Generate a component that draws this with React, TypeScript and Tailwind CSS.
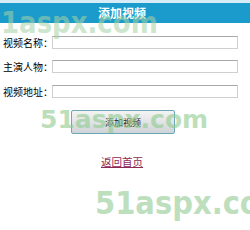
import React from "react";

export default function App() {
  const cjk = { fontFamily: '"Noto Sans CJK SC", "Noto Sans", sans-serif' };
  const wm = { fontFamily: '"DejaVu Sans", Verdana, sans-serif' };
  return (
    <div className="relative w-[250px] h-[230px] overflow-hidden bg-white" style={cjk}>
      <div className="border-t-[3px] border-[#d6ecf6]">
        <div className="h-[20px] bg-[#1a9bcb] flex items-center justify-center pr-[6px] text-white font-bold text-[12px] leading-none">
          添加视频
        </div>
      </div>
      <div className="flex flex-col gap-[11px] pt-[13px] pl-[3px] text-[10px] text-black">
        <div className="flex items-center h-[13px]">
          <span className="w-[49px] shrink-0 whitespace-nowrap">视频名称：</span>
          <input className="w-[186px] h-[13px] border border-[#cfcfcf] border-t-[#a8a8a8] bg-white outline-none" />
        </div>
        <div className="flex items-center h-[13px]">
          <span className="w-[49px] shrink-0 whitespace-nowrap">主演人物：</span>
          <input className="w-[186px] h-[13px] border border-[#cfcfcf] border-t-[#a8a8a8] bg-white outline-none" />
        </div>
        <div className="flex items-center h-[13px] mt-[1px]">
          <span className="w-[49px] shrink-0 whitespace-nowrap">视频地址：</span>
          <input className="w-[186px] h-[13px] border border-[#cfcfcf] border-t-[#a8a8a8] bg-white outline-none" />
        </div>
      </div>
      <div className="flex justify-start pl-[71px] pt-[12px]">
        <button className="w-[104px] h-[24px] border border-[#6aa8b8] rounded-[2px] bg-gradient-to-b from-[#f4f4f4] to-[#cfd4d8] text-[9px] leading-none text-[#1a1a1a]">
          添加视频
        </button>
      </div>
      <div className="flex justify-center pr-[6px] pt-[21px]">
        <a href="#" className="text-[10.5px] leading-[14px] text-[#8c2a55] underline">返回首页</a>
      </div>
      <div className="pointer-events-none absolute left-[1px] top-[12px] whitespace-nowrap text-[26px] font-bold text-[#a6d3a6] opacity-55 leading-none origin-bottom scale-y-[1.15]" style={wm}>
        1aspx.com
      </div>
      <div className="pointer-events-none absolute left-[40px] top-[107px] whitespace-nowrap text-[25px] font-bold text-[#8fcb8f] opacity-60 leading-none" style={wm}>
        51aspx.com
      </div>
      <div className="pointer-events-none absolute left-[95px] top-[188px] whitespace-nowrap text-[29px] font-bold text-[#a2d2a2] opacity-70 leading-none origin-top scale-y-[1.1]" style={wm}>
        51aspx.com
      </div>
    </div>
  );
}
